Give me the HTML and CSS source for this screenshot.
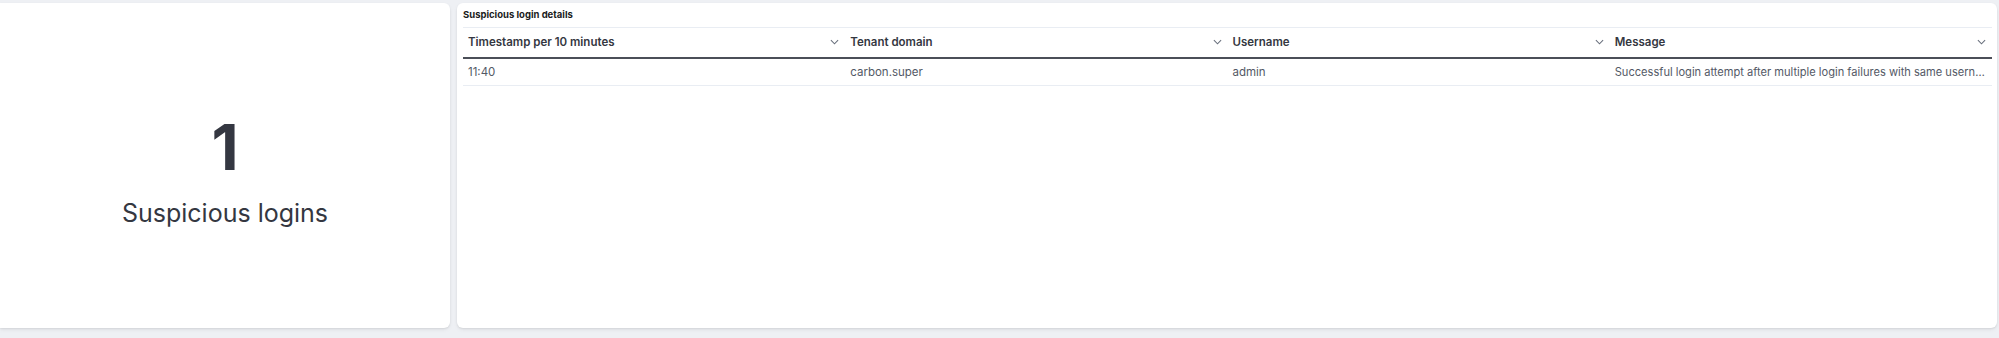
FILE: index.html
```html
<!DOCTYPE html>
<html lang="en">
  <head>
    <meta charset="UTF-8" />
    <title>Suspicious logins</title>
    <link rel="stylesheet" href="styles.css">
  </head>
  <body>
    <div class="dashboard">
      <div class="panel metric-panel">
        <div class="metric">
          <div class="metric-value">1</div>
          <div class="metric-label">Suspicious logins</div>
        </div>
      </div>

      <div class="panel table-panel">
        <div class="panel-title">Suspicious login details</div>
        <table class="data-table">
          <thead>
            <tr>
              <th>
                <div class="th-inner">
                  <span>Timestamp per 10 minutes</span>
                  <svg class="chevron" viewBox="0 0 10 6"><polyline points="1,1 5,5 9,1" /></svg>
                </div>
              </th>
              <th>
                <div class="th-inner">
                  <span>Tenant domain</span>
                  <svg class="chevron" viewBox="0 0 10 6"><polyline points="1,1 5,5 9,1" /></svg>
                </div>
              </th>
              <th>
                <div class="th-inner">
                  <span>Username</span>
                  <svg class="chevron" viewBox="0 0 10 6"><polyline points="1,1 5,5 9,1" /></svg>
                </div>
              </th>
              <th>
                <div class="th-inner">
                  <span>Message</span>
                  <svg class="chevron" viewBox="0 0 10 6"><polyline points="1,1 5,5 9,1" /></svg>
                </div>
              </th>
            </tr>
          </thead>
          <tbody>
            <tr>
              <td>11:40</td>
              <td>carbon.super</td>
              <td>admin</td>
              <td class="msg"><div class="truncate">Successful login attempt after multiple login failures with same username</div></td>
            </tr>
          </tbody>
        </table>
      </div>
    </div>
  </body>
</html>
```

FILE: styles.css
```css
* {
  box-sizing: border-box;
  margin: 0;
  padding: 0;
}

body {
  font-family: 'Inter', 'Liberation Sans', sans-serif;
  background: #eef0f4;
  color: #343741;
  height: 338px;
  overflow: hidden;
}

.dashboard {
  display: flex;
  gap: 7px;
  padding: 3px 2px 0 0;
  height: 328px;
}

.panel {
  background: #fff;
  border-radius: 6px;
  box-shadow: 0 1px 2px rgba(0, 0, 0, 0.08), 0 2px 4px rgba(0, 0, 0, 0.05);
}

.metric-panel {
  width: 450px;
  border-top-left-radius: 0;
  border-bottom-left-radius: 0;
  display: flex;
  justify-content: center;
  align-items: center;
}

.metric {
  text-align: center;
  padding-top: 12px;
}

.metric-value {
  font-size: 63px;
  font-weight: 700;
  line-height: 1;
  color: #343741;
}

.metric-label {
  font-size: 25px;
  line-height: 1.2;
  margin-top: 19px;
  color: #343741;
}

.table-panel {
  flex: 1;
  padding: 0 5px 0 6px;
}

.panel-title {
  font-size: 9.5px;
  font-weight: 700;
  color: #1a1c21;
  height: 24px;
  line-height: 18px;
  padding-top: 3px;
}

.data-table {
  width: 100%;
  border-collapse: collapse;
  table-layout: fixed;
  border-top: 1px solid #e9edf3;
  font-size: 11.5px;
}

.data-table th {
  text-align: left;
  font-weight: 600;
  height: 30px;
  padding: 0 6px 0 5px;
  border-bottom: 2px solid #4b4f58;
}

.th-inner {
  display: flex;
  align-items: center;
  justify-content: space-between;
}

.chevron {
  width: 9px;
  height: 6px;
  fill: none;
  stroke: #69707d;
  stroke-width: 1.2;
}

.data-table td {
  height: 28px;
  padding: 0 5px;
  color: #535966;
  border-bottom: 1px solid #e9edf3;
  white-space: nowrap;
}

.data-table td.msg {
  padding-right: 2px;
  font-size: 11.1px;
}

.truncate {
  overflow: hidden;
  text-overflow: ellipsis;
  white-space: nowrap;
}
```
